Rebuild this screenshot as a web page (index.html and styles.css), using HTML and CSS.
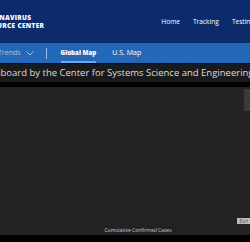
FILE: index.html
```html
<!DOCTYPE html>
<html lang="en">
<head>
    <meta charset="UTF-8">
    <meta name="viewport" content="width=device-width, initial-scale=1.0">
    <title>Coronavirus Resource Center</title>
    <link rel="stylesheet" href="styles.css">
</head>
<body>
    <header class="top">
        <div class="logo">
            <span>CORONAVIRUS</span>
            <span>RESOURCE CENTER</span>
        </div>
        <nav class="main-nav">
            <a href="#">Home</a>
            <a href="#">Tracking</a>
            <a href="#">Testing</a>
        </nav>
    </header>
    <nav class="sub-nav">
        <a href="#" class="trends">Trends
            <svg width="8" height="5" viewBox="0 0 8 5"><path d="M0.5 0.5 L4 4 L7.5 0.5" fill="none" stroke="#9cc0ea" stroke-width="1"/></svg>
        </a>
        <span class="sep"></span>
        <a href="#" class="active">Global Map</a>
        <a href="#">U.S. Map</a>
    </nav>
    <div class="title-bar">
        <h1>Dashboard by the Center for Systems Science and Engineering (CSSE) at Johns Hopkins University</h1>
    </div>
    <div class="map-panel">
        <div class="map-area">
            <div class="side-tab"></div>
            <div class="attrib">Esri</div>
        </div>
        <div class="map-caption">Cumulative Confirmed Cases</div>
    </div>
</body>
</html>
```

FILE: styles.css
```css
body {
    margin: 0;
    padding: 0;
    background-color: #000;
    font-family: "Open Sans", "Liberation Sans", sans-serif;
    overflow: hidden;
}

.top {
    background-color: #0c2b6d;
    height: 43px;
    display: flex;
    align-items: center;
    justify-content: space-between;
}

.logo {
    display: flex;
    flex-direction: column;
    margin-left: -21px;
    color: #fff;
    font-weight: 800;
    font-size: 6.5px;
    line-height: 8px;
    letter-spacing: 0.3px;
}

.main-nav {
    display: flex;
    gap: 13px;
    margin-right: -4px;
}

.main-nav a {
    color: #fff;
    text-decoration: none;
    font-size: 6.6px;
}

.sub-nav {
    background-color: #2368b6;
    height: 20px;
    display: flex;
    align-items: center;
    margin-left: -2px;
}

.sub-nav a {
    color: #fff;
    text-decoration: none;
    font-size: 7px;
    margin-right: 16px;
    height: 20px;
    line-height: 20px;
    box-sizing: border-box;
}

.sub-nav .trends {
    color: #a9c6ea;
    display: flex;
    align-items: center;
    gap: 5px;
    margin-right: 12px;
}

.sub-nav .sep {
    width: 1px;
    height: 11px;
    background-color: #9cc0ea;
    margin-right: 14px;
}

.sub-nav .active {
    font-weight: 800;
    font-size: 6.2px;
    border-bottom: 2px solid #6fa8e8;
}

.title-bar {
    background-color: #1a1a1a;
    height: 18px;
    overflow: hidden;
    margin-top: 1px;
}

.title-bar h1 {
    margin: 0 0 0 -22px;
    white-space: nowrap;
    color: #ddd;
    font-weight: 400;
    font-size: 9.5px;
    line-height: 18px;
}

.map-panel {
    margin-top: 5px;
    background-color: #222;
    height: 148px;
    display: flex;
    flex-direction: column;
}

.map-area {
    flex: 1;
    position: relative;
}

.side-tab {
    position: absolute;
    right: 0;
    top: 2px;
    width: 6px;
    height: 22px;
    background-color: #3a3a3a;
}

.attrib {
    position: absolute;
    right: 0;
    bottom: 2px;
    background-color: #bbb;
    color: #555;
    font-size: 5px;
    padding: 0 2px 0 3px;
    line-height: 6px;
}

.map-caption {
    text-align: center;
    color: #ccc;
    font-size: 5px;
    line-height: 8px;
    margin-bottom: 1px;
    padding-left: 26px;
}
```
